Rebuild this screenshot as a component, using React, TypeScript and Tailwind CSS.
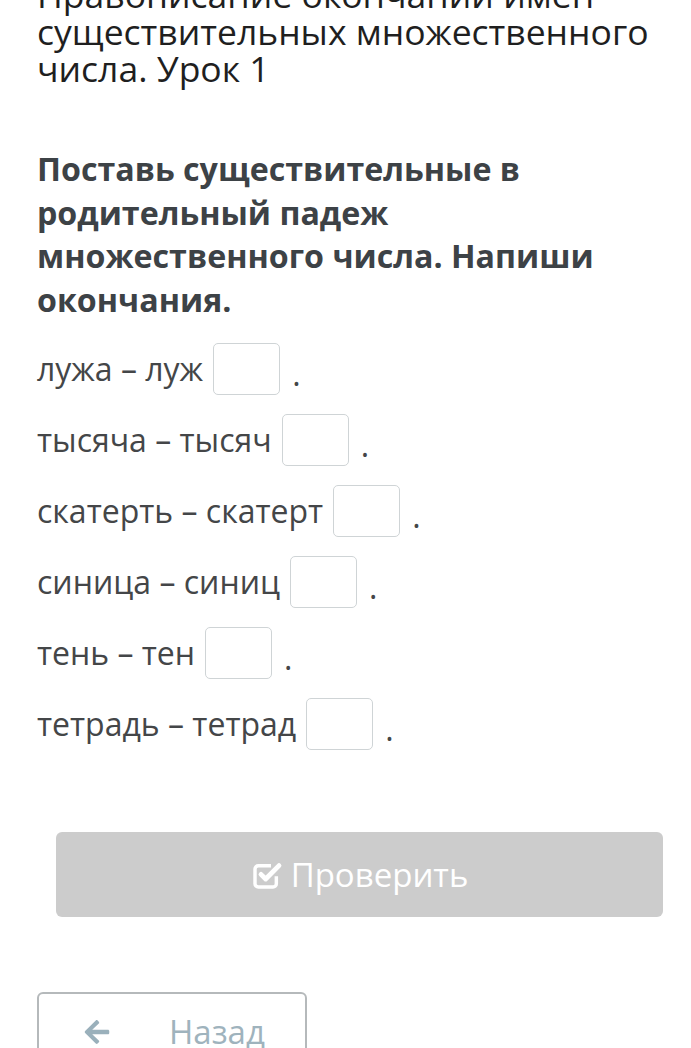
import { FaArrowLeft } from "react-icons/fa"

const rows = [
  { word: "лужа", stem: "луж" },
  { word: "тысяча", stem: "тысяч" },
  { word: "скатерть", stem: "скатерт" },
  { word: "синица", stem: "синиц" },
  { word: "тень", stem: "тен" },
  { word: "тетрадь", stem: "тетрад" },
]

function CheckSquare() {
  return (
    <svg viewBox="0 0 24 24" className="h-[32px] w-[32px]" fill="none" stroke="white">
      <path d="M19 13v5.5a2.5 2.5 0 0 1-2.5 2.5h-11A2.5 2.5 0 0 1 3 18.5v-11A2.5 2.5 0 0 1 5.5 5H15" strokeWidth="2.6" />
      <path d="M7.5 11.5l3.5 3.5L21 5" strokeWidth="3.6" strokeLinecap="round" strokeLinejoin="round" />
    </svg>
  )
}

export default function App() {
  return (
    <div className="h-[1048px] overflow-hidden bg-white font-['Open_Sans',sans-serif]">
      <div className="px-[37px]">
        <h1 className="-mt-[24px] text-[35.5px] leading-[37px] font-normal text-[#1f1f1f]">
          Правописание окончаний имен существительных множественного числа. Урок 1
        </h1>

        <h2 className="mt-[60px] text-[32.2px] leading-[43.5px] font-bold text-[#3d4246]">
          Поставь существительные в родительный падеж множественного числа. Напиши окончания.
        </h2>

        <div className="mt-[22px] flex flex-col gap-[19px]">
          {rows.map((r) => (
            <div key={r.word} className="flex h-[52px] items-center text-[32px] text-[#444648]">
              <span>
                {r.word} – {r.stem}
              </span>
              <div className="ml-[10px] h-[52px] w-[67px] rounded-[5px] border border-[#cfd4d6] bg-white" />
              <span className="ml-[12px] mt-[10px]">.</span>
            </div>
          ))}
        </div>
      </div>

      <div className="mt-[82px] pl-[56px] pr-[28px]">
        <button className="flex h-[85px] w-full items-center justify-center gap-[8px] rounded-[6px] bg-[#cccccc] text-[33px] text-white">
          <CheckSquare />
          <span>Проверить</span>
        </button>
      </div>

      <div className="mt-[75px] px-[37px]">
        <button className="flex h-[80px] w-[270px] items-center rounded-[6px] border-2 border-[#b5b9bb] pl-[44px] text-[33px] text-[#9fb3bd]">
          <FaArrowLeft className="h-[28px] w-[28px] text-[#9ab0bb]" />
          <span className="ml-[58px]">Назад</span>
        </button>
      </div>
    </div>
  )
}
